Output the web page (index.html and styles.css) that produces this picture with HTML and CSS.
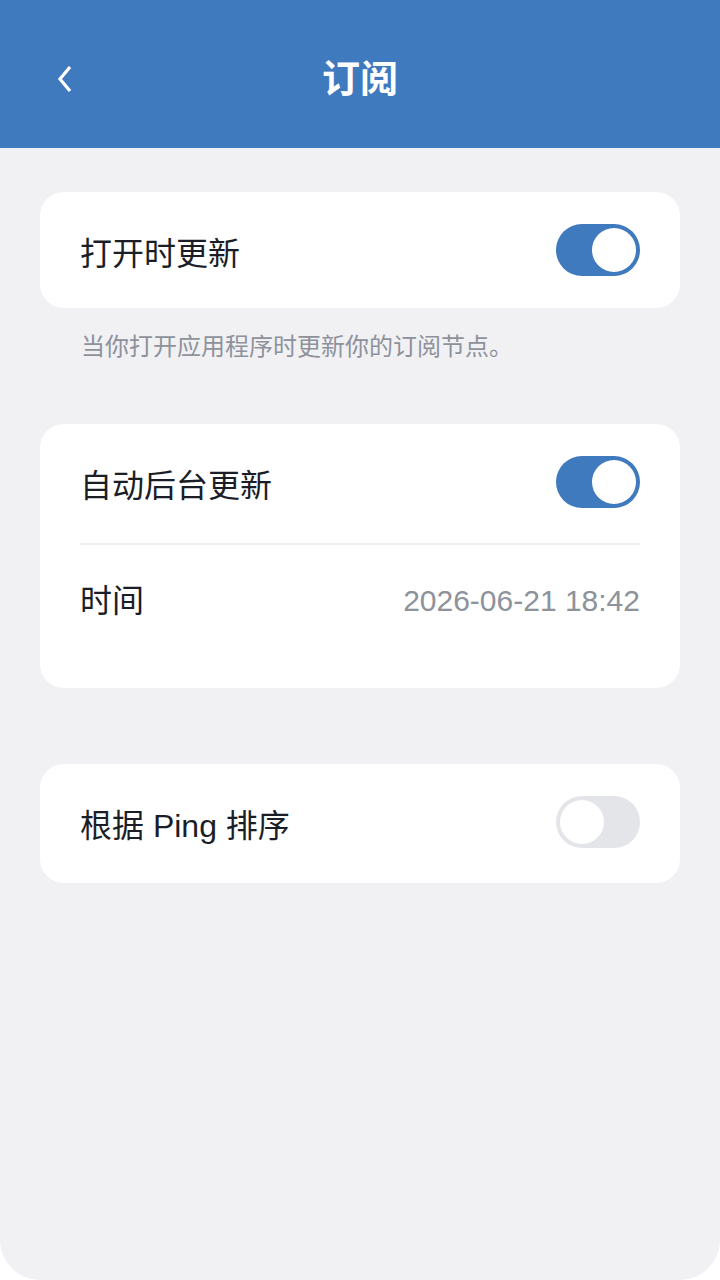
FILE: index.html
```html
<!DOCTYPE html>
<html lang="zh-CN">
<head>
  <meta charset="UTF-8">
  <meta name="viewport" content="width=device-width, initial-scale=1.0">
  <title>订阅</title>
  <link rel="stylesheet" href="styles.css">
</head>
<body>
  <div class="screen">
    <header class="header">
      <span class="back">
        <svg width="16" height="26" viewBox="0 0 16 26">
          <polyline points="13,1 3,13 13,25" fill="none" stroke="#ffffff" stroke-width="3.2" stroke-linejoin="miter"/>
        </svg>
      </span>
      <h1>订阅</h1>
    </header>

    <main class="content">
      <div class="card">
        <div class="row row-switch">
          <span class="label">打开时更新</span>
          <span class="switch on"><span class="knob"></span></span>
        </div>
      </div>
      <p class="hint">当你打开应用程序时更新你的订阅节点。</p>

      <div class="card card-tall">
        <div class="row row-switch">
          <span class="label">自动后台更新</span>
          <span class="switch on"><span class="knob"></span></span>
        </div>
        <div class="divider"></div>
        <div class="row row-time">
          <span class="label">时间</span>
          <span class="value">2026-06-21 18:42</span>
        </div>
      </div>

      <div class="card card-last">
        <div class="row row-switch">
          <span class="label">根据 Ping 排序</span>
          <span class="switch"><span class="knob"></span></span>
        </div>
      </div>
    </main>
  </div>
</body>
</html>
```

FILE: styles.css
```css
* {
  box-sizing: border-box;
}

body {
  margin: 0;
  background-color: #ffffff;
  font-family: "Liberation Sans", "Noto Sans CJK SC", sans-serif;
  color: #1b1e27;
}

.screen {
  width: 720px;
  height: 1280px;
  background-color: #f1f1f4;
  border-radius: 0 0 40px 40px;
  overflow: hidden;
}

.header {
  position: relative;
  height: 148px;
  padding-top: 10px;
  background-color: #3f79be;
  display: flex;
  align-items: center;
  justify-content: center;
}

.header h1 {
  margin: 0;
  color: #ffffff;
  font-size: 38px;
  font-weight: 700;
  line-height: 1;
}

.back {
  position: absolute;
  left: 57px;
  top: 66px;
  display: flex;
}

.content {
  padding: 44px 40px 0;
}

.card {
  background-color: #ffffff;
  border-radius: 24px;
  padding: 32px 40px;
}

.card-tall {
  padding-bottom: 61px;
}

.card-last {
  margin-top: 76px;
  padding-bottom: 35px;
}

.row {
  height: 52px;
  display: flex;
  align-items: center;
  justify-content: space-between;
}

.row-switch .label {
  padding-top: 7px;
}

.row-time {
  margin-top: 30px;
}

.label {
  font-size: 32px;
  line-height: 1;
}

.value {
  font-size: 30px;
  color: #8d929b;
  line-height: 1;
}

.divider {
  margin-top: 35px;
  height: 2px;
  background-color: #ededee;
}

.hint {
  margin: 22px 0 60px 41px;
  font-size: 24px;
  line-height: 34px;
  color: #8d929b;
}

.switch {
  width: 84px;
  height: 52px;
  border-radius: 26px;
  background-color: #e4e5e9;
  padding: 4px;
  display: flex;
  justify-content: flex-start;
}

.switch.on {
  background-color: #3f79be;
  justify-content: flex-end;
}

.knob {
  width: 44px;
  height: 44px;
  border-radius: 50%;
  background-color: #ffffff;
}
```
